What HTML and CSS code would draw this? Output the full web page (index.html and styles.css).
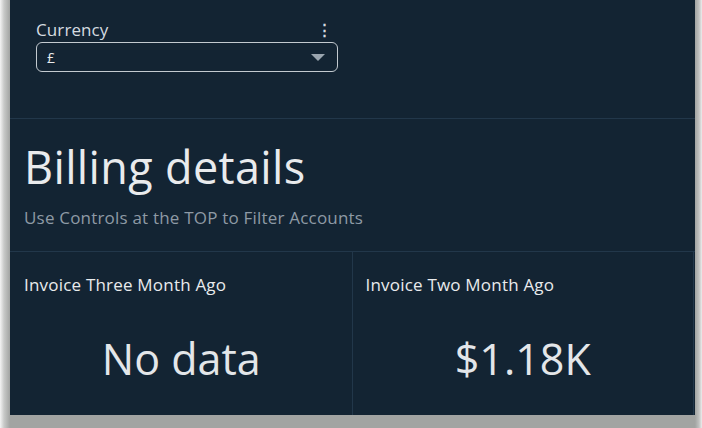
FILE: index.html
```html
<!DOCTYPE html>
<html lang="en">
<head>
    <meta charset="UTF-8">
    <title>Billing details</title>
    <link rel="stylesheet" href="styles.css">
</head>
<body>
    <div class="frame">
        <div class="sheet">
            <div class="controls">
                <div class="control">
                    <div class="control-head">
                        <span class="control-label">Currency</span>
                        <span class="control-menu">&#8942;</span>
                    </div>
                    <div class="select">
                        <span class="select-value">£</span>
                        <span class="select-caret"></span>
                    </div>
                </div>
            </div>

            <div class="title-block">
                <h1>Billing details</h1>
                <p class="subtitle">Use Controls at the TOP to Filter Accounts</p>
            </div>

            <div class="cards">
                <div class="card">
                    <div class="card-title">Invoice Three Month Ago</div>
                    <div class="card-value">No data</div>
                </div>
                <div class="card">
                    <div class="card-title">Invoice Two Month Ago</div>
                    <div class="card-value">$1.18K</div>
                </div>
            </div>
        </div>
    </div>
</body>
</html>
```

FILE: styles.css
```css
* {
    margin: 0;
    padding: 0;
    box-sizing: border-box;
}

body {
    font-family: 'Open Sans', 'Noto Sans', sans-serif;
    background: #fff;
    width: 702px;
    height: 428px;
    overflow: hidden;
}

.frame {
    height: 428px;
    padding: 0 7px 13px 10px;
    background: linear-gradient(to right, #f4f4f4 0, #c8c9c8 4px, #a2a4a2 10px, #a2a4a2 695px, #c0c1c0 699px, #ececec 702px);
}

.sheet {
    height: 415px;
    background: #132433;
    color: #e9ebed;
    display: flex;
    flex-direction: column;
}

.controls {
    height: 119px;
    padding: 17px 0 0 26px;
    border-bottom: 1px solid #22374a;
}

.control {
    width: 302px;
}

.control-head {
    display: flex;
    justify-content: space-between;
    align-items: center;
    height: 24px;
    margin-bottom: 1px;
}

.control-label {
    font-size: 17px;
    letter-spacing: 0.1px;
    color: #d5dbe0;
}

.control-menu {
    font-size: 15px;
    font-weight: 700;
    color: #d5dbe0;
    margin-right: 6px;
}

.select {
    height: 30px;
    border: 1px solid #c3cad0;
    border-radius: 6px;
    display: flex;
    align-items: center;
    justify-content: space-between;
    padding: 0 12px 0 10px;
}

.select-value {
    font-size: 14px;
    color: #e9ebed;
}

.select-caret {
    width: 0;
    height: 0;
    border-left: 7px solid transparent;
    border-right: 7px solid transparent;
    border-top: 7px solid #9aa5af;
}

.title-block {
    height: 133px;
    padding: 17px 14px 0;
    border-bottom: 1px solid #22374a;
}

.title-block h1 {
    font-size: 45px;
    font-weight: 400;
    line-height: 62px;
    letter-spacing: 0.35px;
    color: #e9ebed;
}

.subtitle {
    margin-top: 8px;
    font-size: 17px;
    letter-spacing: 0.2px;
    color: #8e9aa5;
}

.cards {
    flex: 1;
    display: flex;
    padding-right: 1px;
}

.card {
    flex: 1;
    padding: 22px 13px 0 14px;
    border-right: 1px solid #22374a;
    display: flex;
    flex-direction: column;
}

.card + .card {
    padding-left: 13px;
}

.card-title {
    font-size: 17px;
    line-height: 22px;
    letter-spacing: 0.2px;
    color: #e9ebed;
}

.card-value {
    margin-top: 33px;
    text-align: center;
    font-size: 43px;
    line-height: 60px;
    color: #e3e6e9;
}
```
